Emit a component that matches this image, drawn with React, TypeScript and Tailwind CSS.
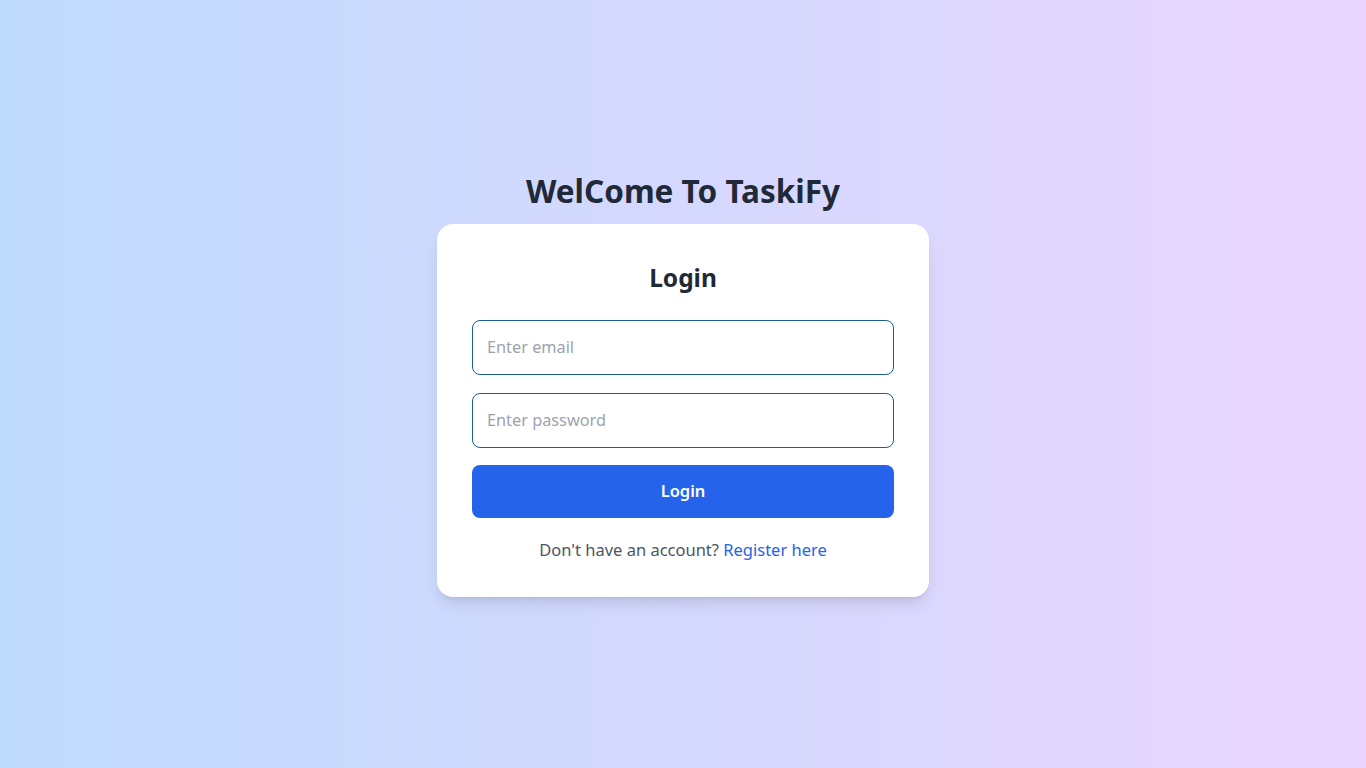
export default function App() {
  return (
    <div
      className="min-h-screen w-full flex flex-col items-center justify-center bg-gradient-to-r from-[#bfdbfe] to-[#e9d5ff]"
      style={{ fontFamily: '"Noto Sans", "Open Sans", sans-serif' }}
    >
      <h1 className="text-[31.5px] leading-[38px] font-bold text-[#1f2937] mb-[14px]">WelCome To TaskiFy</h1>

      <div className="w-[492px] bg-white rounded-2xl shadow-lg px-[35px] pt-[38px] pb-[35px]">
        <h2 className="text-[24.5px] leading-8 font-bold text-[#1f2937] text-center mb-[26px]">Login</h2>

        <form className="flex flex-col" onSubmit={(e) => e.preventDefault()}>
          <input
            type="email"
            placeholder="Enter email"
            className="h-[55px] w-full rounded-lg border border-[#1d5d8c] px-[14px] text-[16.3px] text-[#1f2937] placeholder:text-[#9ca3af] outline-none"
          />
          <input
            type="password"
            placeholder="Enter password"
            className="mt-[18px] h-[55px] w-full rounded-lg border border-[#1d5d8c] px-[14px] text-[16.3px] text-[#1f2937] placeholder:text-[#9ca3af] outline-none"
          />
          <button
            type="submit"
            className="mt-[17px] h-[53px] w-full rounded-lg bg-[#2563eb] text-white text-[16.5px] font-semibold"
          >
            Login
          </button>
        </form>

        <p className="mt-5 text-center text-[16.5px] leading-6 text-[#4b5563]">
          Don't have an account? <a href="#" className="text-[#2563eb]">Register here</a>
        </p>
      </div>
    </div>
  );
}
